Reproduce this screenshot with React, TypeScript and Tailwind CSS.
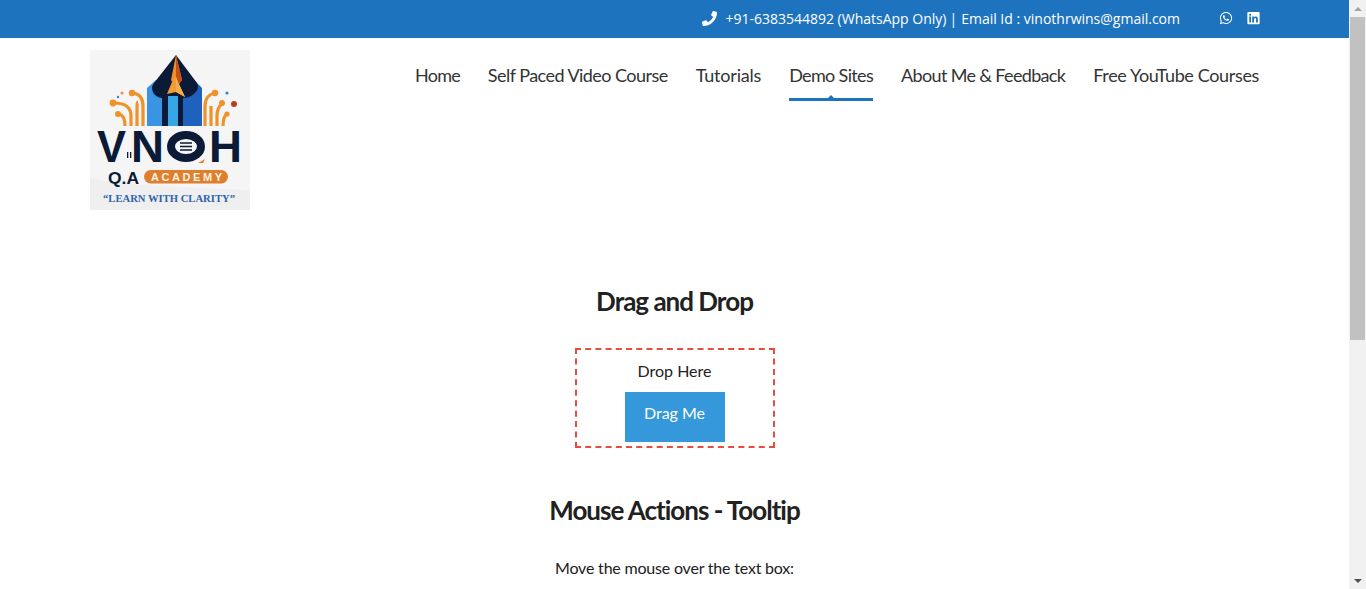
import React from 'react';
import { FaLinkedin, FaPhoneAlt, FaWhatsapp } from 'react-icons/fa';

const navItems = [
  { label: 'Home', tracking: 'tracking-[-0.8px]' },
  { label: 'Self Paced Video Course', tracking: 'tracking-[-0.54px]' },
  { label: 'Tutorials', tracking: 'tracking-[-0.2px]' },
  { label: 'Demo Sites', tracking: 'tracking-[-0.65px]' },
  { label: 'About Me & Feedback', tracking: 'tracking-[-0.66px]' },
  { label: 'Free YouTube Courses', tracking: 'tracking-[-0.35px]' },
];

function Logo() {
  return (
    <svg width="160" height="160" viewBox="0 0 160 160" className="block shrink-0">
      <rect width="160" height="160" fill="#f5f5f5" />
      <path d="M0 128 Q30 134 70 136 T160 140 L160 160 L0 160 Z" fill="#efefef" />
      {/* blue side plates */}
      <path d="M57 38 L66 30 L85 30 L85 76 L57 76 Z" fill="#3a94e4" />
      <path d="M112 38 L104 30 L85 30 L85 76 L112 76 Z" fill="#1f62bd" />
      {/* nib */}
      <path d="M86 5 L107 33 Q110 39 104 44 Q99 48 93 48 L93 76 L72 76 L72 48 Q68 48 64 44 Q60 38 64 33 Z" fill="#0b1a36" />
      <rect x="78" y="46" width="10" height="30" fill="#37a6e6" />
      {/* orange tip */}
      <path d="M86 5 L92 30 L86 38 L81 30 Z" fill="#ef8f2a" />
      <path d="M86 5 L92 30 L86 38 Z" fill="#c4501a" />
      <path d="M84 27 L86 27 L88 32 L95 47 L86 42 L77 44 Z" fill="#f29a33" />
      <path d="M86 27 L88 32 L95 47 L86 42 Z" fill="#f4ad4d" />
      {/* circuit lines */}
      <g fill="none" stroke="#f0922a" strokeWidth="3.2">
        <path d="M43 43 C50 44 53 49 53 56 L53 76" />
        <path d="M48 52 C47 52 47 56 47 60 L47 76" />
        <path d="M24 53 C36 53 41 58 41 66 L41 76" />
        <path d="M29 64 C33 65 35 69 35 76" />
        <path d="M125 43 C119 44 115 49 115 56 L115 76" />
        <path d="M121 56 L121 76" />
        <path d="M132 54 C129 56 127 60 127 66 L127 76" />
        <path d="M137 64 C134 66 133 70 133 76" />
      </g>
      <circle cx="42" cy="43" r="3.2" fill="#f0922a" />
      <circle cx="23" cy="53" r="3.4" fill="#f0922a" />
      <circle cx="28" cy="64" r="3" fill="#f0922a" />
      <circle cx="125" cy="43" r="3.2" fill="#f0922a" />
      <circle cx="132" cy="53" r="3" fill="#f0922a" />
      <circle cx="137" cy="64" r="2.6" fill="#f0922a" />
      <circle cx="144" cy="54" r="3" fill="#b5401c" />
      <circle cx="28" cy="47" r="1.2" fill="#2f86d8" />
      <circle cx="32" cy="43" r="1.5" fill="#f0922a" />
      <circle cx="137" cy="43" r="1.6" fill="#2f86d8" />
      {/* wordmark */}
      <g fontFamily="'Liberation Sans', sans-serif" fontWeight="700" fill="#0b1a36">
        <text x="7" y="112" fontSize="44" textLength="29" lengthAdjust="spacingAndGlyphs">V</text>
        <text x="41" y="112" fontSize="44" textLength="33" lengthAdjust="spacingAndGlyphs">N</text>
        <text x="119" y="112" fontSize="44" textLength="33" lengthAdjust="spacingAndGlyphs">H</text>
        <text x="18" y="133.5" fontSize="16.5" textLength="31" lengthAdjust="spacingAndGlyphs">Q.A</text>
      </g>
      <ellipse cx="96" cy="96.5" rx="15" ry="11.5" fill="#f5f5f5" stroke="#0b1a36" strokeWidth="8" />
      <path d="M90 93 H102 M90 96.5 H102 M90 100 H102" stroke="#0b1a36" strokeWidth="1.5" />
      <rect x="37" y="102" width="1.3" height="6" fill="#0b1a36" />
      <rect x="40" y="102" width="1.3" height="6" fill="#0b1a36" />
      <path d="M108 113 L115 109 L113 113 Z" fill="#e8782a" />
      <rect x="54" y="120" width="84" height="13.5" rx="6.7" fill="#df7f2e" />
      <text x="61" y="130.8" fontFamily="'Liberation Sans', sans-serif" fontWeight="700" fontSize="11" textLength="71" fill="#fff3e2">ACADEMY</text>
      <text x="13" y="152" fontFamily="'Liberation Serif', serif" fontWeight="700" fontSize="10" textLength="132" lengthAdjust="spacingAndGlyphs" fill="#2d62ae">“LEARN WITH CLARITY”</text>
    </svg>
  );
}

function FakeScrollbar() {
  return (
    <div className="flex h-[589px] w-[17px] shrink-0 flex-col items-center bg-[#f1f1f1]">
      <div className="flex h-[17px] items-center justify-center">
        <div className="h-0 w-0 border-x-[4px] border-b-[4px] border-x-transparent border-b-[#a3a3a3]" />
      </div>
      <div className="h-[323px] w-[15px] bg-[#c1c1c1]" />
      <div className="flex-1" />
      <div className="flex h-[17px] items-center justify-center">
        <div className="h-0 w-0 border-x-[4px] border-t-[4px] border-x-transparent border-t-[#505050]" />
      </div>
    </div>
  );
}

export default function App() {
  return (
    <div className="flex h-[589px] w-full overflow-hidden bg-white font-['Lato','Liberation_Sans',sans-serif] text-[#212121]">
      <div className="w-[1349px] shrink-0">
        {/* top bar */}
        <div className="flex h-[38px] items-center justify-end bg-[#1e73be] pb-[2px] pr-[89px] font-['Open_Sans',sans-serif] text-[14px] text-white">
          <FaPhoneAlt className="mr-[8px] h-[15px] w-[15px] -scale-x-100" />
          <span>+91-6383544892 (WhatsApp Only)</span>
          <span className="ml-[3px] mr-[4px]">|</span>
          <span>Email Id : vinothrwins@gmail.com</span>
          <FaWhatsapp className="ml-[39px] h-[14px] w-[14px]" />
          <FaLinkedin className="ml-[14px] h-[14px] w-[13px]" />
        </div>

        {/* header */}
        <div className="flex items-start justify-between pl-[90px] pr-[90px] pt-[12px]">
          <Logo />
          <nav className="flex gap-[28px] pt-[10px] text-[18px] text-[#333]">
            {navItems.map((item) => (
              <a key={item.label} className={`relative h-[41px] leading-[30px] ${item.tracking}`}>
                {item.label}
                {item.label === 'Demo Sites' && (
                  <>
                    <span className="absolute inset-x-0 bottom-0 h-[3px] bg-[#1e73be]" />
                    <span className="absolute bottom-[3px] left-1/2 h-0 w-0 -translate-x-1/2 border-x-[3px] border-b-[3px] border-x-transparent border-b-[#1e73be]" />
                  </>
                )}
              </a>
            ))}
          </nav>
        </div>

        {/* content */}
        <div className="flex flex-col items-center pt-[73px]">
          <h2 className="text-[26px] font-bold leading-[36px] tracking-[-1px]">Drag and Drop</h2>
          <div className="mt-[29px] flex h-[100px] w-[200px] flex-col items-center border-2 border-dashed border-[#e74c3c] pt-[10px]">
            <p className="text-[16px] leading-[22px]">Drop Here</p>
            <button className="mt-[10px] h-[50px] w-[100px] bg-[#3498db] pb-[8px] text-[16px] text-white">Drag Me</button>
          </div>
          <h2 className="mt-[44px] text-[26px] font-bold leading-[36px] tracking-[-1px]">Mouse Actions - Tooltip</h2>
          <p className="mt-[28px] text-[16px] leading-[24px] tracking-[-0.2px]">Move the mouse over the text box:</p>
        </div>
      </div>
      <FakeScrollbar />
    </div>
  );
}
